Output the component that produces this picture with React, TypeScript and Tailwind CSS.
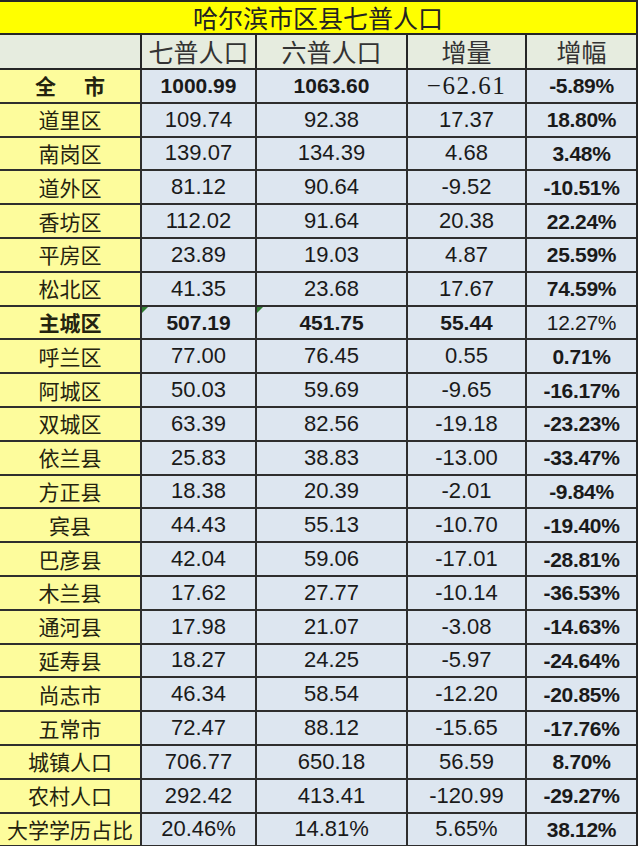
import React from "react";

type Row = {
  name: string;
  v7: string;
  v6: string;
  diff: string;
  pct: string;
  bold?: boolean;
  pctBold?: boolean;
  flag?: boolean;
};

const rows: Row[] = [
  { name: "全市", v7: "1000.99", v6: "1063.60", diff: "−62.61", pct: "-5.89%", bold: true, pctBold: true },
  { name: "道里区", v7: "109.74", v6: "92.38", diff: "17.37", pct: "18.80%", pctBold: true },
  { name: "南岗区", v7: "139.07", v6: "134.39", diff: "4.68", pct: "3.48%", pctBold: true },
  { name: "道外区", v7: "81.12", v6: "90.64", diff: "-9.52", pct: "-10.51%", pctBold: true },
  { name: "香坊区", v7: "112.02", v6: "91.64", diff: "20.38", pct: "22.24%", pctBold: true },
  { name: "平房区", v7: "23.89", v6: "19.03", diff: "4.87", pct: "25.59%", pctBold: true },
  { name: "松北区", v7: "41.35", v6: "23.68", diff: "17.67", pct: "74.59%", pctBold: true },
  { name: "主城区", v7: "507.19", v6: "451.75", diff: "55.44", pct: "12.27%", bold: true, flag: true },
  { name: "呼兰区", v7: "77.00", v6: "76.45", diff: "0.55", pct: "0.71%", pctBold: true },
  { name: "阿城区", v7: "50.03", v6: "59.69", diff: "-9.65", pct: "-16.17%", pctBold: true },
  { name: "双城区", v7: "63.39", v6: "82.56", diff: "-19.18", pct: "-23.23%", pctBold: true },
  { name: "依兰县", v7: "25.83", v6: "38.83", diff: "-13.00", pct: "-33.47%", pctBold: true },
  { name: "方正县", v7: "18.38", v6: "20.39", diff: "-2.01", pct: "-9.84%", pctBold: true },
  { name: "宾县", v7: "44.43", v6: "55.13", diff: "-10.70", pct: "-19.40%", pctBold: true },
  { name: "巴彦县", v7: "42.04", v6: "59.06", diff: "-17.01", pct: "-28.81%", pctBold: true },
  { name: "木兰县", v7: "17.62", v6: "27.77", diff: "-10.14", pct: "-36.53%", pctBold: true },
  { name: "通河县", v7: "17.98", v6: "21.07", diff: "-3.08", pct: "-14.63%", pctBold: true },
  { name: "延寿县", v7: "18.27", v6: "24.25", diff: "-5.97", pct: "-24.64%", pctBold: true },
  { name: "尚志市", v7: "46.34", v6: "58.54", diff: "-12.20", pct: "-20.85%", pctBold: true },
  { name: "五常市", v7: "72.47", v6: "88.12", diff: "-15.65", pct: "-17.76%", pctBold: true },
  { name: "城镇人口", v7: "706.77", v6: "650.18", diff: "56.59", pct: "8.70%", pctBold: true },
  { name: "农村人口", v7: "292.42", v6: "413.41", diff: "-120.99", pct: "-29.27%", pctBold: true },
  { name: "大学学历占比", v7: "20.46%", v6: "14.81%", diff: "5.65%", pct: "38.12%", pctBold: true },
];

const grid = "grid grid-cols-[140px_115px_151px_119px_111px]";
const cjk = "font-['Noto_Sans_CJK_SC',sans-serif]";
const num = "font-['Liberation_Sans',Arial,sans-serif]";

function Flag() {
  // little green error marker from the spreadsheet
  return (
    <span className="absolute left-0 top-0 w-0 h-0 border-t-[6px] border-t-[#2e7d32] border-r-[6px] border-r-transparent" />
  );
}

export default function App() {
  return (
    <div className="w-[640px] h-[846px] bg-white overflow-hidden">
      <div className="w-[638px] border-r-2 border-[#262626]">
        {/* ── Title ── */}
        <div
          className={`h-[35px] border-t-2 border-b-2 border-[#262626] bg-[#ffff00] flex items-center justify-center text-[25px] text-[#222] leading-none ${cjk}`}
        >
          哈尔滨市区县七普人口
        </div>

        {/* ── Header ── */}
        <div className={`${grid} h-[35px] border-b-2 border-[#262626] bg-[#e6ecdf] text-[25px] text-[#333] leading-none ${cjk}`}>
          <div />
          <div className="border-l-2 border-[#262626] flex items-center justify-center">七普人口</div>
          <div className="border-l-2 border-[#262626] flex items-center justify-center">六普人口</div>
          <div className="border-l-2 border-[#262626] flex items-center justify-center">增量</div>
          <div className="border-l-2 border-[#262626] flex items-center justify-center">增幅</div>
        </div>

        {/* ── Data rows ── */}
        {rows.map((r) => {
          const numCls = r.bold ? "font-bold text-[21px]" : "text-[22px]";
          return (
            <div key={r.name} className={`${grid} h-[33.8px] border-b-2 border-[#2e2e2e] leading-none`}>
              <div
                className={`bg-[#fdfc9c] flex items-center justify-center text-[21px] text-[#24230f] ${cjk} ${
                  r.bold ? "font-bold" : ""
                }`}
              >
                {r.name === "全市" ? (
                  <span className="flex gap-[28px]">
                    <span>全</span>
                    <span>市</span>
                  </span>
                ) : (
                  r.name
                )}
              </div>
              <div
                className={`relative border-l-2 border-[#2e2e2e] bg-[#dde6f0] flex items-center justify-center text-[#1a1a1a] ${num} ${numCls}`}
              >
                {r.flag && <Flag />}
                {r.v7}
              </div>
              <div
                className={`relative border-l-2 border-[#2e2e2e] bg-[#dde6f0] flex items-center justify-center text-[#1a1a1a] ${num} ${numCls}`}
              >
                {r.flag && <Flag />}
                {r.v6}
              </div>
              {r.name === "全市" ? (
                <div className="border-l-2 border-[#2e2e2e] bg-[#dde6f0] flex items-center justify-center text-[25px] tracking-[1.5px] text-[#1a1a1a] font-['Liberation_Serif','Times_New_Roman',serif]">
                  {r.diff}
                </div>
              ) : (
                <div
                  className={`border-l-2 border-[#2e2e2e] bg-[#dde6f0] flex items-center justify-center text-[#1a1a1a] ${num} ${numCls}`}
                >
                  {r.diff}
                </div>
              )}
              <div
                className={`border-l-2 border-[#2e2e2e] bg-[#dde6f0] flex items-center justify-center text-[21px] tracking-[-0.3px] text-[#1a1a1a] ${num} ${
                  r.pctBold ? "font-bold" : ""
                }`}
              >
                {r.pct}
              </div>
            </div>
          );
        })}
      </div>
    </div>
  );
}
